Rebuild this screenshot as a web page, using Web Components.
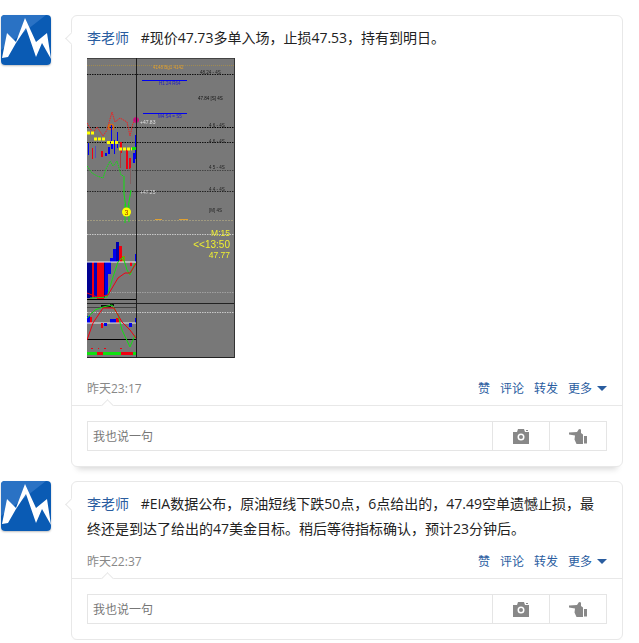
<!DOCTYPE html>
<html lang="zh">
<head>
<meta charset="utf-8">
<title>feed</title>
<style>
  html, body { margin: 0; background: #fff; }
  body { font-family: "Open Sans", "Noto Sans CJK SC", sans-serif; font-size: 14px; color: #222; }
</style>
</head>
<body>
<post-feed>
  <feed-post author="李老师" time="昨天23:17">
    #现价47.73多单入场，止损47.53，持有到明日。
    <trade-chart slot="media"></trade-chart>
  </feed-post>
  <feed-post author="李老师" time="昨天22:37">
    #EIA数据公布，原油短线下跌50点，6点给出的，47.49空单遗憾止损，最终还是到达了给出的47美金目标。稍后等待指标确认，预计23分钟后。
  </feed-post>
</post-feed>

<script>
class PostFeed extends HTMLElement {
  constructor() {
    super();
    this.attachShadow({ mode: "open" }).innerHTML = `
      <style>
        :host { display: flex; flex-direction: column; gap: 14px; padding: 15px 16px 0 1px; }
      </style>
      <slot></slot>`;
  }
}

class UserAvatar extends HTMLElement {
  constructor() {
    super();
    this.attachShadow({ mode: "open" }).innerHTML = `
      <style>
        :host { display: block; width: 50px; height: 50px; flex: none; }
        svg { display: block; border-radius: 4px; box-shadow: 0 1px 2px rgba(0,0,0,.25); }
      </style>
      <svg width="50" height="50" viewBox="0 0 50 50">
        <rect width="50" height="50" fill="#0a5bb4"/>
        <path d="M0 0H45L0 35Z" fill="#2a72c4"/>
        <path d="M1 43 6 18 15 27 24 3 35 27 46 18 50 44 41 28 35 42 25 13 15 28 7 42Z" fill="#fff"/>
      </svg>`;
  }
}

class PostActions extends HTMLElement {
  constructor() {
    super();
    this.attachShadow({ mode: "open" }).innerHTML = `
      <style>
        :host { display: flex; align-items: center; gap: 10px; font-size: 12px; color: #2a5d9f; }
        .more { display: flex; align-items: center; gap: 5px; }
        i { display: block; border: 5px solid transparent; border-top: 5px solid #2a5d9f; border-bottom: 0; }
      </style>
      <span>赞</span><span>评论</span><span>转发</span>
      <span class="more">更多<i></i></span>`;
  }
}

class CommentBox extends HTMLElement {
  constructor() {
    super();
    this.attachShadow({ mode: "open" }).innerHTML = `
      <style>
        :host { display: flex; height: 28px; border: 1px solid #e5e5e5; font-size: 12px; color: #777; }
        .say { flex: 1; display: flex; align-items: center; padding-left: 5px; }
        .btn { width: 56px; display: flex; align-items: center; justify-content: center; border-left: 1px solid #e5e5e5; }
      </style>
      <div class="say">我也说一句</div>
      <div class="btn">
        <svg width="16" height="15" viewBox="0 0 16 15">
          <path fill="#888" fill-rule="evenodd" d="M0 3H4L5 0H11L12 3H16V15H0ZM8 4.500A3.500 3.500 0 1 0 8 11.500 3.500 3.500 0 0 0 8 4.500ZM8 6A2 2 0 1 1 8 10 2 2 0 0 1 8 6ZM13 1H15V2H13Z"/>
        </svg>
      </div>
      <div class="btn">
        <svg width="19" height="15" viewBox="0 0 19 15">
          <path fill="#888" d="M0 3.500 8 3 10 0 12 .5 12 4 14 5.500V15H7.500L5.500 10.500 6 6.500 0 5.500ZM15 7H18V14.500H15Z"/>
        </svg>
      </div>`;
  }
}

class FeedPost extends HTMLElement {
  constructor() {
    super();
    const author = this.getAttribute("author");
    const time = this.getAttribute("time");
    this.attachShadow({ mode: "open" }).innerHTML = `
      <style>
        :host { display: flex; gap: 20px; align-items: flex-start; }
        .card { position: relative; flex: 1; box-sizing: border-box; border: 1px solid #e8e8e8; border-radius: 6px; background: #fff;
          box-shadow: 0 8px 6px -6px rgba(0,0,0,.16); }
        .card::before { content: ""; position: absolute; left: -5px; top: 18px; width: 8px; height: 8px; background: #fff;
          border-left: 1px solid #e8e8e8; border-bottom: 1px solid #e8e8e8; transform: rotate(45deg); }
        .body { padding: 9px 15px 0; line-height: 25px; }
        .name { color: #2a5d9f; margin-right: 8px; }
        ::slotted([slot="media"]) { margin: 8px 0 13px; }
        .foot { display: flex; justify-content: space-between; align-items: center; height: 34px; padding: 0 15px 0; box-sizing: border-box;
          margin-top: 3px; font-size: 12px; color: #888; }
        .reply { position: relative; border-top: 1px solid #e8e8e8; padding: 15px; }
        .reply::before { content: ""; position: absolute; left: 31px; top: -5px; width: 8px; height: 8px; background: #fff;
          border-left: 1px solid #e8e8e8; border-top: 1px solid #e8e8e8; transform: rotate(45deg); }
      </style>
      <user-avatar></user-avatar>
      <div class="card">
        <div class="body"><span class="name">${author}</span> <slot></slot><slot name="media"></slot></div>
        <div class="foot"><span>${time}</span><post-actions></post-actions></div>
        <div class="reply"><comment-box></comment-box></div>
      </div>`;
  }
}

// the chart is a shrunken terminal screenshot, so everything is tiny and a bit soft
class TradeChart extends HTMLElement {
  constructor() {
    super();
    const dots = (y, c, x2 = 148, d = "1.5 1") => `<line x1="0" x2="${x2}" y1="${y}" y2="${y}" stroke="${c}" stroke-dasharray="${d}"/>`;
    const solid = (y, c, x2 = 148) => `<line x1="0" x2="${x2}" y1="${y}" y2="${y}" stroke="${c}"/>`;
    const bar = (x, y, w, h, c) => `<rect x="${x}" y="${y}" width="${w}" height="${h}" fill="${c}"/>`;
    const line = (pts, c, extra = "") => `<polyline fill="none" stroke="${c}" points="${pts}" ${extra}/>`;
    const label = (x, y, s, c, t) => `<text x="${x}" y="${y}" font-size="${s}" fill="${c}">${t}</text>`;
    const endLabel = (y, s, t) => `<text x="143" y="${y}" font-size="${s}" fill="#f0f030" text-anchor="end">${t}</text>`;
    const dash = (x1, x2, y, c) => `<line x1="${x1}" x2="${x2}" y1="${y}" y2="${y}" stroke="${c}" stroke-width="3" stroke-dasharray="3 1"/>`;
    const blue = "#0000f0", red = "#f00010", green = "#10e010", yellow = "#ffff00";

    const grid = [
      dots(7.500, "#a08a50", 148, "1 1"), dots(16.500, "#111"), dots(69.500, "#000"),
      dots(84.500, "#111"), dots(112.500, "#444"), dots(133.500, "#222"),
      dots(162.500, "#a09a80", 148, "2 1"), dots(176.500, "#c8c8c8"), dots(234.500, "#a0a0a0"), dots(254.500, "#c8c8c8"),
      solid(.5, "#444"), solid(245.500, "#222"), solid(249.500, "#444", 49), solid(241.500, "#000", 49),
      solid(281.500, "#000", 49), solid(299.500, "#222"),
    ].join("");

    const candles = [
      bar(1, 85, 1, 12, blue), bar(5, 90, 1, 11, red), bar(8, 88, 1, 12, "#5050c0"), bar(14, 93, 2, 6, red),
      bar(18, 95, 2, 3, blue), bar(21, 89, 2, 7, blue), bar(24, 67, 1, 24, blue), bar(24, 85, 2, 6, blue),
      bar(27, 82, 1, 14, blue), bar(30, 74, 1, 16, blue), bar(33, 84, 2, 11, red), bar(33, 90, 1, 20, "#a04040"),
      bar(39, 92, 2, 19, red), bar(42, 100, 2, 11, red), bar(43, 110, 1, 16, "#806060"), bar(46, 95, 2, 10, blue),
      bar(49, 64, 1, 38, blue), bar(48, 77, 2, 24, blue),
      dash(0, 7, 75, yellow), dash(7, 19, 81, yellow), dash(20, 32, 84.500, yellow), dash(32, 45, 91, yellow), bar(45, 89, 5, 3, green),
    ].join("");

    const upper = [
      line("0,65 6,75 10,69 16,78 20,72 25,54 28,64 33,60 40,64 43,78 46,65 49,62", "#f02020", 'stroke-dasharray="1.500 .8"'),
      line("0,108 5,115 10,118 16,120 19,111 23,103 26,108 30,103 34,117 37,118", green, 'stroke-dasharray="1.500 .8"'),
      line("37,118 37,136 39,150", green), line("44,132 41,150", green),
      `<circle cx="24" cy="69" r="2.500" fill="none" stroke="#e06a10" stroke-width="1.500"/>`,
      `<circle cx="49" cy="62" r="2.500" fill="#c0107a" stroke="#d01080"/>`,
      line("38,146 38,165", green), line("42,147 42,164", green),
      `<circle cx="39.500" cy="154" r="4.500" fill="${yellow}"/>`,
      label(37.500, 156.500, 7, "#a03000", "3"),
    ].join("");

    const labels = [
      bar(55, 22, 45, 1, blue), bar(56, 55, 44, 1, blue),
      `<g class="tiny">`,
      label(66, 11, 4.500, "#e0a030", "4148 Bg1 4142"), label(72, 27, 4.500, "#2020c0", "H1 24 R64"), label(71, 60, 4.500, "#2020c0", "M4 S4 = S5"),
      label(113, 16, 4.500, "#222", "48.24 - 4S"), label(111, 42, 4.500, "#111", "47.84 [S] 4S"),
      label(122, 69, 4.500, "#222", "4 6 - 4S"), label(122, 85, 4.500, "#222", "4 6 - 4S"),
      label(122, 111, 4.500, "#222", "4 5 - 4S"), label(122, 133, 4.500, "#222", "4 4 - 4S"), label(122, 154, 4.500, "#222", "[M] 4S"),
      label(53, 66, 5, "#e0e0e0", "+47.83"), label(53, 136, 5, "#d8d8d8", "+47.25"),
      `</g>`,
      bar(68, 161, 7, 1, "#e0a030"), bar(92, 161, 9, 1, "#e0a030"),
      endLabel(178, 8.500, "M:15"), endLabel(190, 10, "&lt;&lt;13:50"), endLabel(200, 8.500, "47.77"),
    ].join("");

    const lower = [
      bar(0, 204, 5, 36, "#000090"), bar(5, 204, 2, 36, red), bar(7, 204, 3, 36, "#0000c0"), bar(10, 204, 4, 37, red), bar(14, 204, 3, 37, red),
      bar(17, 204, 1, 36, "#000090"), bar(18, 204, 3, 33, blue), bar(21, 204, 3, 12, blue), bar(43, 204, 2, 4, red),
      bar(23, 200, 3, 4, blue), bar(26, 191, 3, 13, blue), bar(29, 184, 3, 20, "#0000b0"), bar(32, 188, 3, 16, red), bar(35, 198, 3, 6, "#a08010"), bar(48, 196, 2, 8, blue),
      solid(204, "#f4f4f4", 49),
      line("3,240 20,239 26,219 31,204 36,199 40,212 43,217 48,205", green),
      line("0,235 10,239 21,237 31,220 38,215 43,215 50,204", red),
      bar(14, 247, 10, 2, "#111"), bar(23, 246, 4, 2, "#111"),
      bar(0, 258, 3, 7, blue), bar(3, 259, 2, 6, red), bar(23, 261, 6, 4, blue), bar(29, 260, 3, 5, red), bar(48, 260, 2, 5, blue),
      solid(265, "#e8e8e8", 49), bar(14, 265, 2, 5, red), bar(17, 265, 3, 3, blue), bar(42, 265, 3, 4, blue),
      line("0,260 8,252 16,249 25,247 31,257 35,272 43,289 48,277", green),
      line("0,282 6,265 16,250 27,250 35,264 43,272 49,280", red),
      Array.from({ length: 25 }, (_, i) => bar(i * 2, 294, 2, 3, (i > 4 && i < 8) || (i > 16 && i < 23) ? red : green)).join(""),
      bar(4, 290, 2, 1, red), bar(11, 290, 1, 1, red), bar(17, 290, 2, 1, red), bar(33, 290, 2, 1, red),
    ].join("");

    this.attachShadow({ mode: "open" }).innerHTML = `
      <style>
        :host { display: block; width: 148px; height: 300px; }
        svg { display: block; background: #787878; font-family: "Liberation Sans", sans-serif; }
        .soft { filter: blur(.2px); }
        .tiny { filter: blur(.3px); }
      </style>
      <svg width="148" height="300" viewBox="0 0 148 300">
        <g class="soft">${grid}${labels}${upper}${candles}${lower}</g>
        <rect x="49" width="1" height="300" fill="#1c1c1c"/>
        <rect x="147" width="1" height="300" fill="#333"/>
      </svg>`;
  }
}

customElements.define("post-feed", PostFeed);
customElements.define("user-avatar", UserAvatar);
customElements.define("post-actions", PostActions);
customElements.define("comment-box", CommentBox);
customElements.define("trade-chart", TradeChart);
customElements.define("feed-post", FeedPost);
</script>
</body>
</html>
